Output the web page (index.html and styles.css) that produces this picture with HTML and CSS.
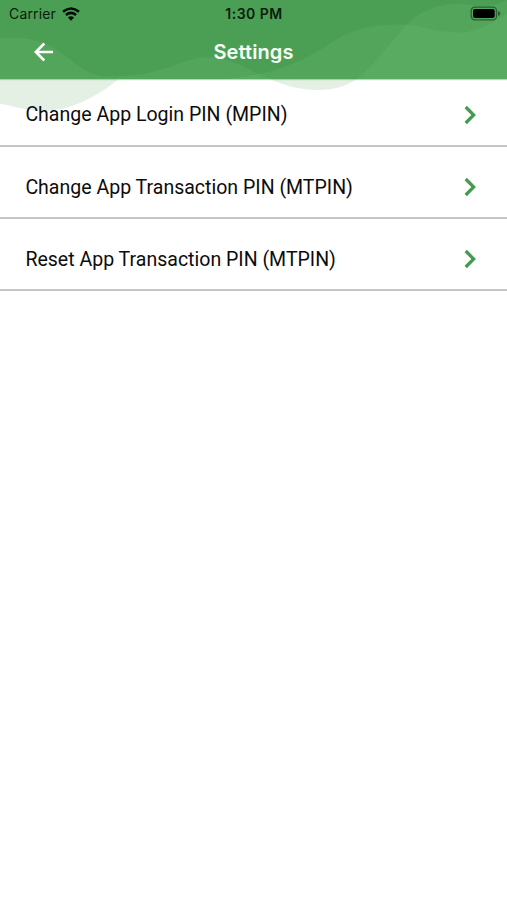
FILE: index.html
```html
<!DOCTYPE html>
<html lang="en">
<head>
<meta charset="utf-8">
<title>Settings</title>
<link rel="stylesheet" href="styles.css">
</head>
<body>
<svg class="waves" viewBox="0 0 507 120" aria-hidden="true">
  <path class="wave-pale" d="M0 79H119C96 97 70 111 43 111C25 111 12 105 0 104Z"/>
  <path class="wave-pale" d="M270 79C286 86 300 90 319 90C334 90 346 86 357 79Z"/>
</svg>
<header class="header">
  <svg class="header-art" viewBox="0 0 507 79" aria-hidden="true">
    <path class="tint" d="M0 38C18 37 32 38 44 43C67 52 79 74 104 76C135 78 155 72 184 62C220 49 239 66 270 79H0Z"/>
    <path class="tint" d="M225 79C285 73 307 58 334 41C357 25 393 22 418 26C438 31 458 35 475 30C489 26 498 18 507 14V79Z"/>
    <path class="tint" d="M357 79C376 63 391 42 409 22C425 8 445 2 465 4C486 8 496 5 507 0V79Z"/>
  </svg>
  <div class="status">
    <div class="carrier"><span>Carrier</span>
      <svg class="wifi" viewBox="0 0 18 14" aria-hidden="true">
        <path d="M1 4.8Q9-1.8 17 4.8M3.9 8Q9 3.9 14.1 8"/>
        <path class="wifi-dot" d="M5.9 10.4Q9 8 12.1 10.4L9 13.7Z"/>
      </svg>
    </div>
    <span class="time">1:30 PM</span>
    <svg class="battery" viewBox="0 0 31 15" aria-hidden="true">
      <rect class="case" x="1.2" y="1.2" width="25.3" height="12.6" rx="3.5"/>
      <rect x="3" y="3" width="21.7" height="9" rx="2"/>
      <path class="cap" d="M28 5Q30.5 6 30.5 7.5T28 10Z"/>
    </svg>
  </div>
  <div class="bar">
    <svg class="back" viewBox="0 0 20 20" aria-label="Back"><path d="M19 10H2M10.3 1.5L1.8 10L10.3 18.5"/></svg>
    <h1>Settings</h1>
  </div>
</header>
<main class="list">
  <div class="row"><span>Change App Login PIN (MPIN)</span><svg class="chevron" viewBox="0 0 12 20" aria-hidden="true"><path d="M1.7 2L9.7 10L1.7 18"/></svg></div>
  <div class="row"><span>Change App Transaction PIN (MTPIN)</span><svg class="chevron" viewBox="0 0 12 20" aria-hidden="true"><path d="M1.7 2L9.7 10L1.7 18"/></svg></div>
  <div class="row"><span>Reset App Transaction PIN (MTPIN)</span><svg class="chevron" viewBox="0 0 12 20" aria-hidden="true"><path d="M1.7 2L9.7 10L1.7 18"/></svg></div>
</main>
</body>
</html>
```
FILE: styles.css
```css
* { box-sizing: border-box; }
body {
  position: relative;
  margin: 0;
  min-height: 900px;
  background: #fff;
  color: #0c0c0c;
  font-family: Roboto, "Liberation Sans", sans-serif;
}
.waves { position: absolute; top: 0; left: 0; width: 507px; height: 120px; z-index: -1; }
.wave-pale { fill: #e4f0e4; }
.header { position: relative; height: 79px; background: #4b9f55; box-shadow: 0 1px 1px #4b9f5566; }
.header-art { position: absolute; inset: 0; width: 507px; height: 79px; }
.tint { fill: #a0f0ac; fill-opacity: .08; }
.status {
  position: relative;
  display: grid;
  grid-template-columns: 1fr auto 1fr;
  align-items: center;
  height: 27px;
  padding: 0 6px 0 9px;
  font-family: Inter, sans-serif;
  font-size: 14px;
  color: #0b1c0d;
}
.carrier { display: flex; align-items: center; gap: 6px; letter-spacing: .15px; }
.wifi { width: 18px; height: 14px; fill: none; stroke: #050c06; stroke-width: 2.6; }
.wifi-dot { fill: #050c06; stroke: none; }
.time { position: relative; left: -1px; font-weight: 600; font-size: 14px; letter-spacing: .5px; }
.battery { justify-self: end; width: 31px; height: 15px; fill: #000; }
.case { fill: none; stroke: #2b6132; stroke-width: 1.3; }
.cap { fill: #2b6132; }
.bar { position: relative; display: grid; grid-template-columns: 1fr auto 1fr; align-items: center; height: 50px; padding: 0 34px; }
.back { width: 20px; height: 20px; fill: none; stroke: #fff; stroke-width: 2.6; }
h1 { margin: 0; color: #f7fff7; font: 600 20px/24px Inter, sans-serif; letter-spacing: .1px; }
.row {
  display: flex;
  align-items: center;
  justify-content: space-between;
  height: 72px;
  padding: 10px 31px 0 25.4px;
  border-bottom: 2px solid #c6c6c6;
  font-size: 19.55px;
  white-space: nowrap;
}
.row:first-child { height: 68px; padding-top: 5px; }
.chevron { width: 12px; height: 20px; fill: none; stroke: #429b50; stroke-width: 3.2; }
```
